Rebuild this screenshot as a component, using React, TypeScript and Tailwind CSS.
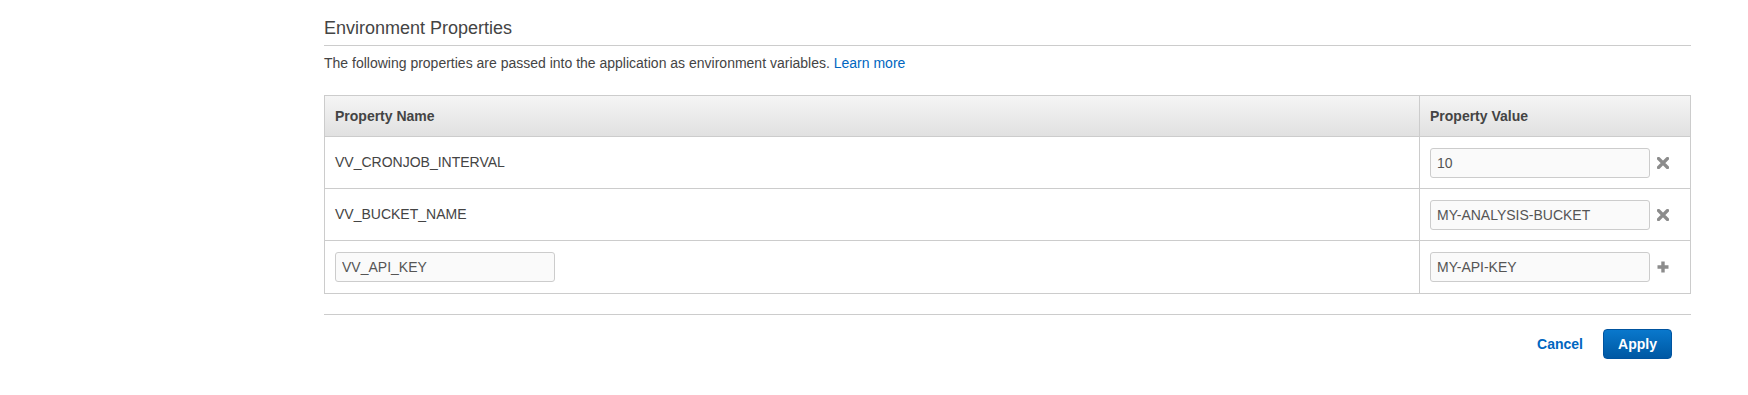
import React from 'react';

interface EnvProperty {
  name: string;
  value: string;
  editableName?: boolean;
}

const properties: EnvProperty[] = [
  { name: 'VV_CRONJOB_INTERVAL', value: '10' },
  { name: 'VV_BUCKET_NAME', value: 'MY-ANALYSIS-BUCKET' },
  { name: 'VV_API_KEY', value: 'MY-API-KEY', editableName: true },
];

const RemoveIcon = () => (
  <svg width="12" height="12" viewBox="0 0 12 12" className="shrink-0">
    <path d="M1.5 1.5 L10.5 10.5 M10.5 1.5 L1.5 10.5" stroke="#8c8c8c" strokeWidth="3.2" strokeLinecap="round" />
  </svg>
);

const AddIcon = () => (
  <svg width="12" height="12" viewBox="0 0 12 12" className="shrink-0">
    <path d="M6 0.5 V11.5 M0.5 6 H11.5" stroke="#8c8c8c" strokeWidth="3.4" />
  </svg>
);

const TextInput = ({ value }: { value: string }) => (
  <input
    defaultValue={value}
    className="h-[30px] w-[220px] rounded-[3px] border border-[#cccccc] bg-[#fafafa] px-[6px] text-[14px] text-[#555] outline-none"
  />
);

export default function App() {
  return (
    <div className="min-h-[395px] bg-white font-['Liberation_Sans',Arial,sans-serif] text-[#444]">
      <div className="ml-[324px] mr-[57px] pt-[18px]">
        {/* Section title */}
        <h2 className="border-b border-[#cccccc] pb-[7px] text-[18px] leading-[20px] text-[#444]">
          Environment Properties
        </h2>
        <p className="mt-[8px] text-[14px] leading-[18px] text-[#444]">
          The following properties are passed into the application as environment variables.{' '}
          <a href="#" className="text-[#0066c0]">Learn more</a>
        </p>

        {/* Properties table */}
        <div className="mt-[23px] border border-[#cccccc]">
          <div className="flex h-[41px] border-b border-[#cccccc] bg-gradient-to-b from-[#f5f5f5] to-[#e1e1e1] text-[14px] font-bold text-[#444]">
            <div className="flex flex-1 items-center border-r border-[#cccccc] px-[10px]">Property Name</div>
            <div className="flex w-[270px] items-center px-[10px]">Property Value</div>
          </div>
          {properties.map((p, i) => (
            <div
              key={p.name}
              className={`flex h-[52px] text-[14px] ${i < properties.length - 1 ? 'border-b border-[#cccccc]' : ''}`}
            >
              <div className="flex flex-1 items-center border-r border-[#cccccc] px-[10px]">
                {p.editableName ? <TextInput value={p.name} /> : <span>{p.name}</span>}
              </div>
              <div className="flex w-[270px] items-center gap-[7px] px-[10px]">
                <TextInput value={p.value} />
                {p.editableName ? <AddIcon /> : <RemoveIcon />}
              </div>
            </div>
          ))}
        </div>

        {/* Footer actions */}
        <div className="mt-[20px] flex items-center justify-end gap-[20px] border-t border-[#cccccc] pr-[19px] pt-[14px]">
          <button className="text-[14px] font-bold text-[#0066c0]">Cancel</button>
          <button className="h-[30px] w-[69px] rounded-[4px] border border-[#00539f] bg-gradient-to-b from-[#0a78cc] to-[#0058a3] text-[14px] font-bold text-white">
            Apply
          </button>
        </div>
      </div>
    </div>
  );
}
